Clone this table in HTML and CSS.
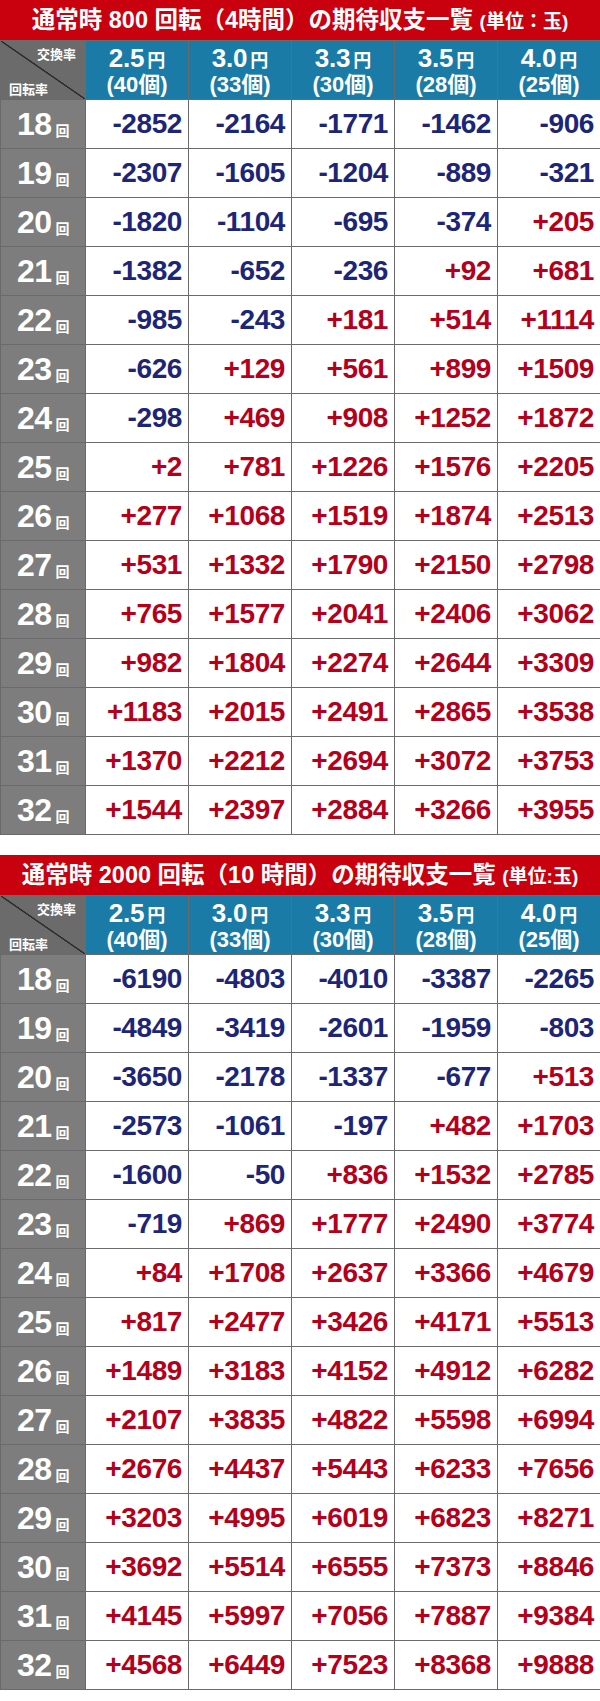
FILE: index.html
```html
<!DOCTYPE html>
<html lang="ja">
<head>
<meta charset="utf-8">
<title>期待収支一覧</title>
<link rel="stylesheet" href="styles.css">
</head>
<body>
<section class="block">
  <h2 class="title">通常時 800 回転（4時間）の期待収支一覧 <small>(単位：玉)</small></h2>
  <div class="grid">
    <div class="corner"><span class="c-top">交換率</span><span class="c-bot">回転率</span></div>
    <div class="head"><span class="rate">2.5<em>円</em></span><span class="cnt">(40個)</span></div>
    <div class="head"><span class="rate">3.0<em>円</em></span><span class="cnt">(33個)</span></div>
    <div class="head"><span class="rate">3.3<em>円</em></span><span class="cnt">(30個)</span></div>
    <div class="head"><span class="rate">3.5<em>円</em></span><span class="cnt">(28個)</span></div>
    <div class="head"><span class="rate">4.0<em>円</em></span><span class="cnt">(25個)</span></div>

    <div class="lbl">18<em>回</em></div><div class="v m">-2852</div><div class="v m">-2164</div><div class="v m">-1771</div><div class="v m">-1462</div><div class="v m">-906</div>
    <div class="lbl">19<em>回</em></div><div class="v m">-2307</div><div class="v m">-1605</div><div class="v m">-1204</div><div class="v m">-889</div><div class="v m">-321</div>
    <div class="lbl">20<em>回</em></div><div class="v m">-1820</div><div class="v m">-1104</div><div class="v m">-695</div><div class="v m">-374</div><div class="v p">+205</div>
    <div class="lbl">21<em>回</em></div><div class="v m">-1382</div><div class="v m">-652</div><div class="v m">-236</div><div class="v p">+92</div><div class="v p">+681</div>
    <div class="lbl">22<em>回</em></div><div class="v m">-985</div><div class="v m">-243</div><div class="v p">+181</div><div class="v p">+514</div><div class="v p">+1114</div>
    <div class="lbl">23<em>回</em></div><div class="v m">-626</div><div class="v p">+129</div><div class="v p">+561</div><div class="v p">+899</div><div class="v p">+1509</div>
    <div class="lbl">24<em>回</em></div><div class="v m">-298</div><div class="v p">+469</div><div class="v p">+908</div><div class="v p">+1252</div><div class="v p">+1872</div>
    <div class="lbl">25<em>回</em></div><div class="v p">+2</div><div class="v p">+781</div><div class="v p">+1226</div><div class="v p">+1576</div><div class="v p">+2205</div>
    <div class="lbl">26<em>回</em></div><div class="v p">+277</div><div class="v p">+1068</div><div class="v p">+1519</div><div class="v p">+1874</div><div class="v p">+2513</div>
    <div class="lbl">27<em>回</em></div><div class="v p">+531</div><div class="v p">+1332</div><div class="v p">+1790</div><div class="v p">+2150</div><div class="v p">+2798</div>
    <div class="lbl">28<em>回</em></div><div class="v p">+765</div><div class="v p">+1577</div><div class="v p">+2041</div><div class="v p">+2406</div><div class="v p">+3062</div>
    <div class="lbl">29<em>回</em></div><div class="v p">+982</div><div class="v p">+1804</div><div class="v p">+2274</div><div class="v p">+2644</div><div class="v p">+3309</div>
    <div class="lbl">30<em>回</em></div><div class="v p">+1183</div><div class="v p">+2015</div><div class="v p">+2491</div><div class="v p">+2865</div><div class="v p">+3538</div>
    <div class="lbl">31<em>回</em></div><div class="v p">+1370</div><div class="v p">+2212</div><div class="v p">+2694</div><div class="v p">+3072</div><div class="v p">+3753</div>
    <div class="lbl">32<em>回</em></div><div class="v p">+1544</div><div class="v p">+2397</div><div class="v p">+2884</div><div class="v p">+3266</div><div class="v p">+3955</div>
  </div>
</section>

<section class="block second">
  <h2 class="title t2">通常時 2000 回転（10 時間）の期待収支一覧 <small>(単位:玉)</small></h2>
  <div class="grid">
    <div class="corner"><span class="c-top">交換率</span><span class="c-bot">回転率</span></div>
    <div class="head"><span class="rate">2.5<em>円</em></span><span class="cnt">(40個)</span></div>
    <div class="head"><span class="rate">3.0<em>円</em></span><span class="cnt">(33個)</span></div>
    <div class="head"><span class="rate">3.3<em>円</em></span><span class="cnt">(30個)</span></div>
    <div class="head"><span class="rate">3.5<em>円</em></span><span class="cnt">(28個)</span></div>
    <div class="head"><span class="rate">4.0<em>円</em></span><span class="cnt">(25個)</span></div>

    <div class="lbl">18<em>回</em></div><div class="v m">-6190</div><div class="v m">-4803</div><div class="v m">-4010</div><div class="v m">-3387</div><div class="v m">-2265</div>
    <div class="lbl">19<em>回</em></div><div class="v m">-4849</div><div class="v m">-3419</div><div class="v m">-2601</div><div class="v m">-1959</div><div class="v m">-803</div>
    <div class="lbl">20<em>回</em></div><div class="v m">-3650</div><div class="v m">-2178</div><div class="v m">-1337</div><div class="v m">-677</div><div class="v p">+513</div>
    <div class="lbl">21<em>回</em></div><div class="v m">-2573</div><div class="v m">-1061</div><div class="v m">-197</div><div class="v p">+482</div><div class="v p">+1703</div>
    <div class="lbl">22<em>回</em></div><div class="v m">-1600</div><div class="v m">-50</div><div class="v p">+836</div><div class="v p">+1532</div><div class="v p">+2785</div>
    <div class="lbl">23<em>回</em></div><div class="v m">-719</div><div class="v p">+869</div><div class="v p">+1777</div><div class="v p">+2490</div><div class="v p">+3774</div>
    <div class="lbl">24<em>回</em></div><div class="v p">+84</div><div class="v p">+1708</div><div class="v p">+2637</div><div class="v p">+3366</div><div class="v p">+4679</div>
    <div class="lbl">25<em>回</em></div><div class="v p">+817</div><div class="v p">+2477</div><div class="v p">+3426</div><div class="v p">+4171</div><div class="v p">+5513</div>
    <div class="lbl">26<em>回</em></div><div class="v p">+1489</div><div class="v p">+3183</div><div class="v p">+4152</div><div class="v p">+4912</div><div class="v p">+6282</div>
    <div class="lbl">27<em>回</em></div><div class="v p">+2107</div><div class="v p">+3835</div><div class="v p">+4822</div><div class="v p">+5598</div><div class="v p">+6994</div>
    <div class="lbl">28<em>回</em></div><div class="v p">+2676</div><div class="v p">+4437</div><div class="v p">+5443</div><div class="v p">+6233</div><div class="v p">+7656</div>
    <div class="lbl">29<em>回</em></div><div class="v p">+3203</div><div class="v p">+4995</div><div class="v p">+6019</div><div class="v p">+6823</div><div class="v p">+8271</div>
    <div class="lbl">30<em>回</em></div><div class="v p">+3692</div><div class="v p">+5514</div><div class="v p">+6555</div><div class="v p">+7373</div><div class="v p">+8846</div>
    <div class="lbl">31<em>回</em></div><div class="v p">+4145</div><div class="v p">+5997</div><div class="v p">+7056</div><div class="v p">+7887</div><div class="v p">+9384</div>
    <div class="lbl">32<em>回</em></div><div class="v p">+4568</div><div class="v p">+6449</div><div class="v p">+7523</div><div class="v p">+8368</div><div class="v p">+9888</div>
  </div>
</section>
</body>
</html>
```
FILE: styles.css
```css
html, body {
  margin: 0;
  padding: 0;
  background: #ffffff;
}
body {
  width: 600px;
  font-family: "Liberation Sans", "Noto Sans CJK JP", sans-serif;
  font-weight: bold;
}
.block {
  width: 600px;
}
.second {
  margin-top: 20px;
}
.title {
  margin: 0;
  height: 40px;
  background: #c9000e;
  color: #ffffff;
  font-size: 23.5px;
  font-weight: bold;
  line-height: 40px;
  text-align: center;
  white-space: nowrap;
  letter-spacing: 0;
}
.title small {
  font-size: 19px;
}
.t2 {
  font-size: 23.5px;
}
.grid {
  display: grid;
  grid-template-columns: 84px repeat(5, 102px);
  grid-template-rows: 58px repeat(15, 48px);
  gap: 1px;
  padding: 1px 0 1px 1px;
  background: #6a6a6a;
}
.corner {
  background:
    linear-gradient(to bottom left, transparent calc(50% - 1px), #2e2e2e calc(50% - 0.5px), #2e2e2e calc(50% + 0.5px), transparent calc(50% + 1px)),
    #6b6b6b;
  display: flex;
  flex-direction: column;
  justify-content: space-between;
  padding: 5px 9px 3px 8px;
  color: #ffffff;
  font-family: "Noto Sans CJK JP", sans-serif;
  font-size: 13px;
  line-height: 15px;
}
.c-top {
  align-self: flex-end;
}
.c-bot {
  align-self: flex-start;
}
.head {
  background: #1a7ba6;
  color: #ffffff;
  display: flex;
  flex-direction: column;
  align-items: center;
  justify-content: center;
  padding-top: 1px;
}
.rate {
  font-size: 26px;
  line-height: 27px;
  letter-spacing: -0.2px;
}
.rate em {
  font-style: normal;
  font-family: "Noto Sans CJK JP", sans-serif;
  font-size: 18px;
  margin-left: 3px;
}
.cnt {
  font-size: 22px;
  line-height: 24px;
  letter-spacing: 0;
}
.lbl {
  background: #7d7d7d;
  color: #ffffff;
  display: flex;
  align-items: center;
  justify-content: center;
  font-size: 32px;
  letter-spacing: -0.5px;
  padding-top: 1px;
}
.lbl em {
  font-style: normal;
  font-family: "Noto Sans CJK JP", sans-serif;
  font-size: 14px;
  margin-left: 4px;
  padding-top: 11px;
}
.v {
  background: #ffffff;
  display: flex;
  align-items: center;
  justify-content: flex-end;
  padding-right: 6px;
  font-size: 28px;
  letter-spacing: -0.4px;
}
.m {
  color: #1d2577;
}
.p {
  color: #b4001b;
}
```
